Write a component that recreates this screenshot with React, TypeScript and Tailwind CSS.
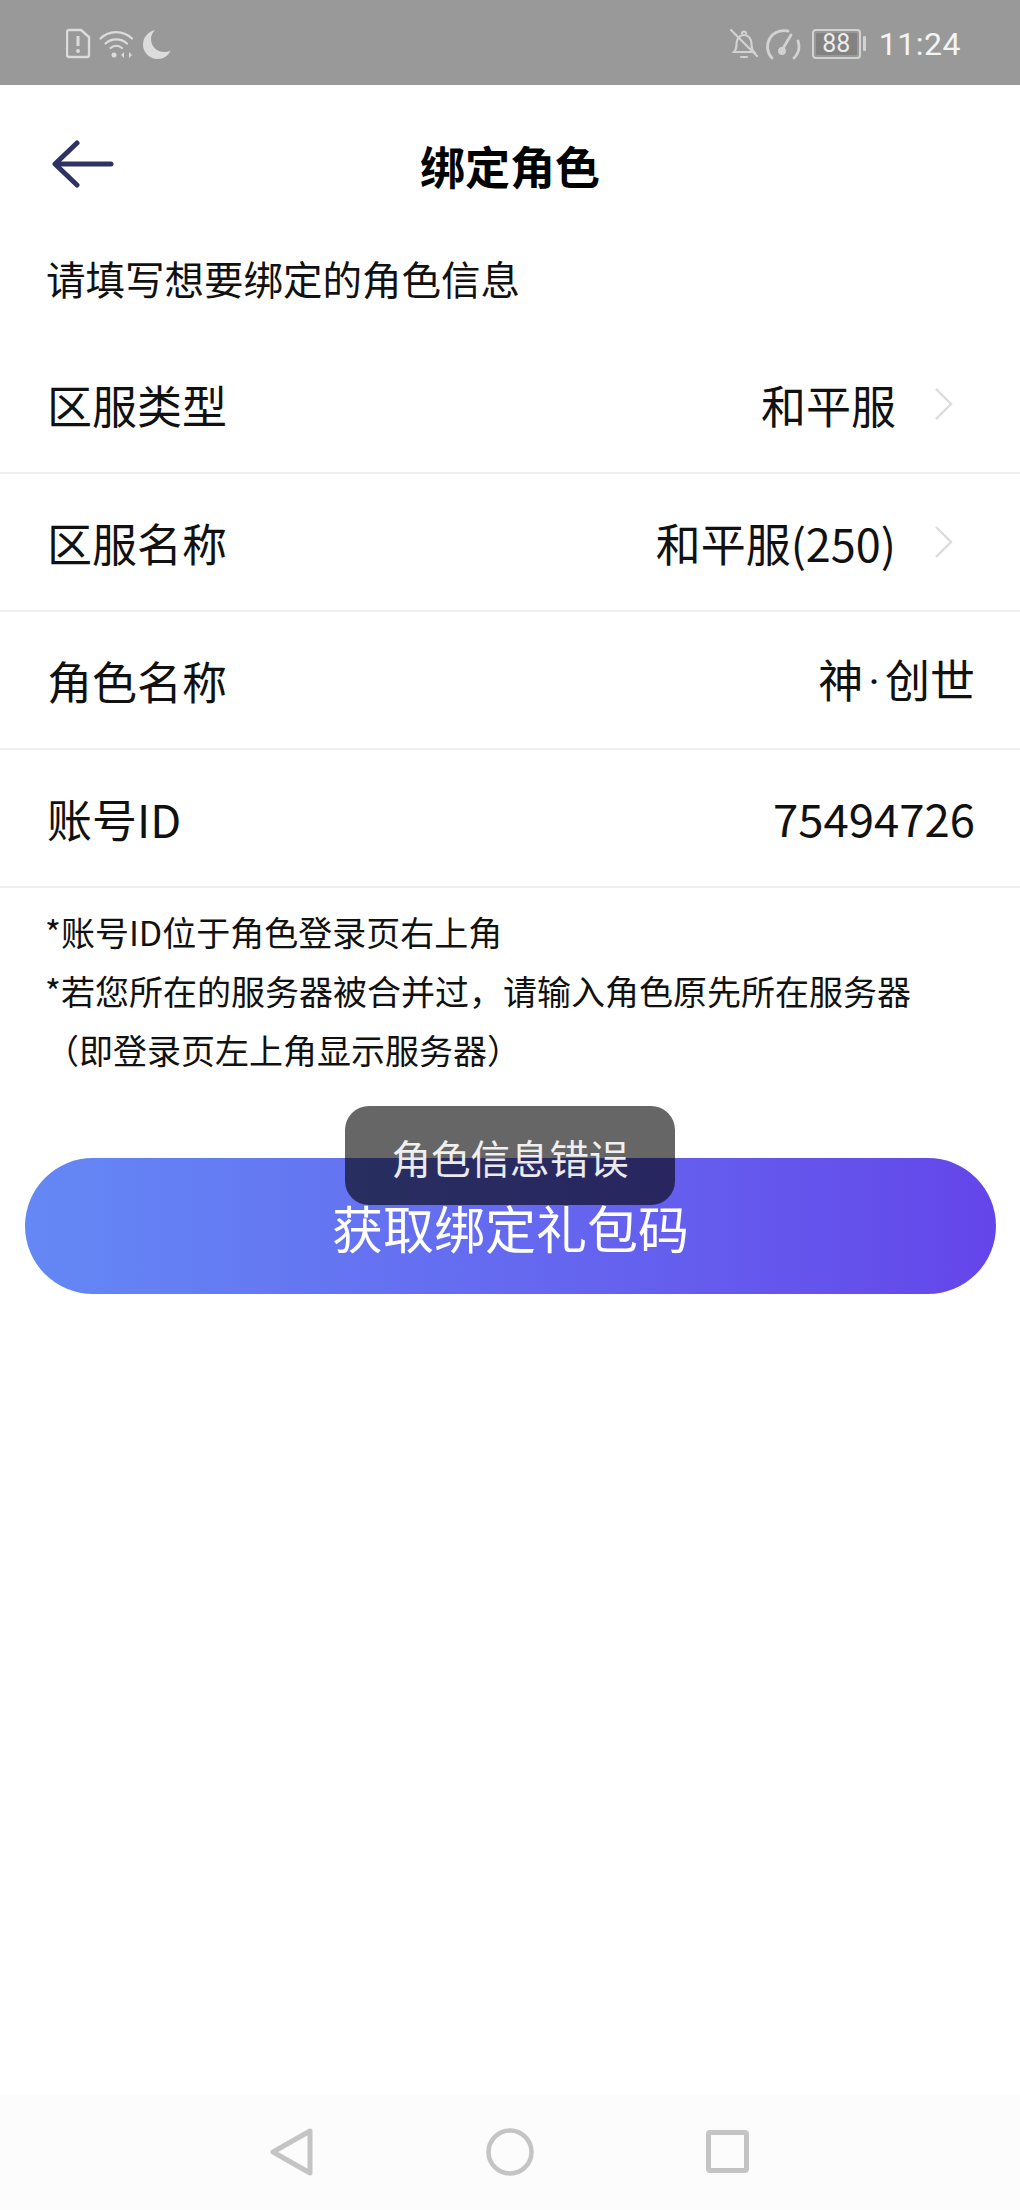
const cjk = "font-['Noto_Sans_CJK_SC','Noto_Sans',sans-serif]";

function StatusBar() {
  return (
    <div className="h-[85px] bg-[#999999] flex items-center justify-between pl-[66px] pr-[59px] pt-[2px] shrink-0">
      <div className="flex items-center gap-[8px]">
        {/* sim alert */}
        <svg width="25" height="31" viewBox="0 0 25 31" fill="none">
          <path d="M3 2h12l8 7v18a2 2 0 0 1-2 2H3a2 2 0 0 1-2-2V4a2 2 0 0 1 2-2z" stroke="#dcdcdc" strokeWidth="2.4" />
          <path d="M12 8v10" stroke="#dcdcdc" strokeWidth="3" />
          <circle cx="12" cy="23" r="2" fill="#dcdcdc" />
        </svg>
        {/* wifi */}
        <svg width="36" height="30" viewBox="0 0 36 30" fill="none" stroke="#dcdcdc" strokeWidth="2.2" strokeLinecap="round">
          <path d="M1.5 9.5C10 1 24 1 33 9.5" />
          <path d="M6.5 14.5c6-5.500 15.500-5.500 21.500 0" />
          <path d="M11.500 19c3.500-3 8-3 11.500 0" />
          <circle cx="15" cy="26" r="2.500" fill="#dcdcdc" stroke="none" />
          <path d="M25 23l-3 3 3 3zM30 23l3 3-3 3z" fill="#dcdcdc" stroke="none" />
        </svg>
        {/* moon */}
        <svg width="28" height="30" viewBox="0 0 28 30">
          <path d="M12 1C5 2.500 0 8.500 0 15.500 0 23.500 6.500 30 14.500 30c6 0 11-3.500 13-8.500-2 1-4 1.500-6 1.500C13.500 23 8 17 8 10c0-3.500 1.500-6.500 4-9z" fill="#dcdcdc" />
        </svg>
      </div>
      <div className="flex items-center">
        {/* muted bell */}
        <svg width="28" height="32" viewBox="0 0 28 32" fill="none" stroke="#d2d2d2" strokeWidth="2.2" strokeLinecap="round">
          <path d="M4 24c2-2 2.500-4 2.500-8 0-5 3-9 7.500-9s7.500 4 7.500 9c0 4 .5 6 2.500 8z" />
          <path d="M12 5.500a2 2 0 0 1 4 0" />
          <path d="M11 29h6" />
          <path d="M1 2l26 26" />
        </svg>
        {/* gauge */}
        <svg className="ml-[7px]" width="36" height="34" viewBox="0 0 36 34" fill="none" stroke="#d2d2d2" strokeWidth="2.8" strokeLinecap="round">
          <path d="M7 31C2 26 1 18 5 11 9 5 16 3 23 4" />
          <path d="M29 31c5-5 6-11 4-17" />
          <path d="M17 23l9-15" />
          <circle cx="17" cy="24" r="2.500" fill="#d2d2d2" />
        </svg>
        {/* battery */}
        <div className="ml-[11px] flex items-center">
          <div className="w-[49px] h-[30px] rounded-[4px] border-[2px] border-[#d2d2d2] p-[2px]">
            <div className="h-full w-full rounded-[1px] bg-[#828282] flex items-center justify-center text-[#ececec] text-[25px] leading-none font-['Roboto',sans-serif]">
              88
            </div>
          </div>
          <div className="ml-[2px] w-[3px] h-[15px] rounded-[1px] bg-[#d2d2d2]" />
        </div>
        <span className="ml-[13px] text-[32px] leading-none text-[#f4f4f4] font-['Roboto',sans-serif] tracking-[0.5px]">11:24</span>
      </div>
    </div>
  );
}

function Row({ label, value, arrow }: { label: string; value: React.ReactNode; arrow?: boolean }) {
  return (
    <div className={`h-[138px] flex items-center justify-between border-b-2 border-[#efefef] pl-[47px] ${arrow ? "pr-[66px]" : "pr-[45px]"}`}>
      <span className="text-[45px] leading-none text-[#111111]">{label}</span>
      <div className="flex items-center">
        <span className="text-[45px] leading-none text-[#111111]">{value}</span>
        {arrow && (
          <svg className="ml-[38px]" width="20" height="34" viewBox="0 0 20 34" fill="none" stroke="#dcdcdc" strokeWidth="2.4">
            <path d="M2 2l15 15L2 32" />
          </svg>
        )}
      </div>
    </div>
  );
}

export default function App() {
  return (
    <div className={`w-[1020px] h-[2210px] bg-white flex flex-col overflow-hidden relative ${cjk}`}>
      <StatusBar />

      {/* Header */}
      <div className="h-[160px] relative flex items-center justify-center shrink-0">
        <svg className="absolute left-[52px] top-[55px]" width="62" height="48" viewBox="0 0 62 48" fill="none" stroke="#2f3263" strokeWidth="5" strokeLinecap="round" strokeLinejoin="round">
          <path d="M25 3L3 24l22 21" />
          <path d="M4 24h55" />
        </svg>
        <h1 className="text-[45px] leading-none font-bold text-black">绑定角色</h1>
      </div>

      <p className="text-[39.5px] leading-none text-[#111111] pl-[46px] pt-[13px] pb-[38.5px]">请填写想要绑定的角色信息</p>

      {/* Form rows */}
      <div className="flex flex-col">
        <Row label="区服类型" value="和平服" arrow />
        <Row label="区服名称" value="和平服(250)" arrow />
        <Row label="角色名称" value={<>神<span className="font-['Roboto',sans-serif] mx-[5px]">·</span>创世</>} />
        <Row label="账号ID" value={<span className="text-[45.5px]">75494726</span>} />
      </div>

      {/* Notes */}
      <div className="pl-[45px] pt-[14px] text-[34px] leading-[59px] text-[#111111]">
        <p>*账号ID位于角色登录页右上角</p>
        <p>*若您所在的服务器被合并过，请输入角色原先所在服务器</p>
        <p>（即登录页左上角显示服务器）</p>
      </div>

      {/* Submit */}
      <div className="pl-[25px] pr-[24px] mt-[79px]">
        <button className="w-full h-[136px] rounded-[68px] bg-gradient-to-r from-[#6488f5] to-[#6445ea] text-white text-[51px] leading-none pt-[2px]">
          获取绑定礼包码
        </button>
      </div>

      {/* Toast */}
      <div className="absolute left-[345px] top-[1106px] w-[330px] h-[99px] rounded-[24px] bg-black/60 flex items-center justify-center text-white/90 text-[39.5px] leading-none pt-[2px]">
        角色信息错误
      </div>

      {/* Nav bar */}
      <div className="mt-auto h-[115px] bg-[#fcfcfc] flex items-start justify-between pl-[270px] pr-[271px] pt-[33px]">
        <svg width="44" height="48" viewBox="0 0 44 48" fill="none" stroke="#c4c4c4" strokeWidth="5" strokeLinejoin="round">
          <path d="M40 3L3 24l37 21z" />
        </svg>
        <svg width="48" height="48" viewBox="0 0 48 48" fill="none" stroke="#c4c4c4" strokeWidth="4.500">
          <circle cx="24" cy="24" r="21.500" />
        </svg>
        <svg className="mt-[2px]" width="43" height="43" viewBox="0 0 43 43" fill="none" stroke="#c4c4c4" strokeWidth="5" strokeLinejoin="round">
          <rect x="2.500" y="2.500" width="38" height="38" rx="1.500" />
        </svg>
      </div>
    </div>
  );
}
